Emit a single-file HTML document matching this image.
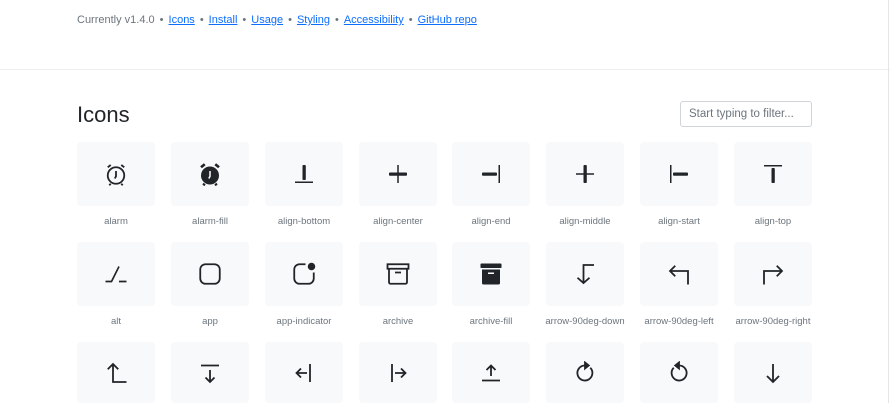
<!DOCTYPE html>
<html><head><meta charset="utf-8"><style>
*{box-sizing:border-box;margin:0;padding:0}
body{width:890px;height:403px;overflow:hidden;background:#fff;font-family:"Liberation Sans",sans-serif;position:relative}
.nav{position:absolute;left:77px;top:14px;font-size:11px;color:#6c757d;white-space:nowrap}
.nav a{color:#0d6efd;text-decoration:underline}
.nav span{margin:0 5px}
.hr{position:absolute;left:0;right:0;top:69px;border-top:1px solid #eceef0}
h1{position:absolute;left:77px;top:102px;font-size:22px;font-weight:500;color:#212529}
.in{position:absolute;left:680px;top:101px;width:132px;height:26px;border:1px solid #ced4da;border-radius:3px;font-size:11.5px;color:#6c757d;padding:6px 8px}
.t{position:absolute;width:78px;height:64px;background:#f8f9fa;border-radius:4px;display:flex;align-items:center;justify-content:center}
.l{position:absolute;width:90px;margin-left:-6px;text-align:center;font-size:9.5px;color:#6c757d;white-space:nowrap}
svg{width:24px;height:24px}
.vl{position:absolute;left:888px;top:0;bottom:0;border-left:1px solid #e5e5e5}
</style></head><body>
<div class="nav">Currently v1.4.0<span>•</span><a>Icons</a><span>•</span><a>Install</a><span>•</span><a>Usage</a><span>•</span><a>Styling</a><span>•</span><a>Accessibility</a><span>•</span><a>GitHub repo</a></div>
<div class="hr"></div>
<div class="vl"></div>
<h1>Icons</h1>
<div class="in">Start typing to filter...</div>

<!-- row1 -->
<div class="t" style="left:77px;top:142px"><svg viewBox="0 0 16 16" fill="none" stroke="#212529" stroke-width="1.2"><circle cx="8" cy="9" r="5.5"/><path d="M8 6v3.5l-.8 1.5M2.5 3.5l2-1.5M13.5 3.5l-2-1.5M4.5 14.5l-1 1M11.5 14.5l1 1"/></svg></div>
<div class="l" style="left:77px;top:216px">alarm</div>
<div class="t" style="left:171px;top:142px"><svg viewBox="0 0 16 16"><circle cx="8" cy="9" r="6" fill="#212529"/><path d="M2 3.5l2.5-2M14 3.5l-2.5-2M4.5 14.5l-1 1M11.5 14.5l1 1" stroke="#212529" stroke-width="1.8"/><path d="M8 6v3.5l-.8 1.5" stroke="#fff" stroke-width="1"/></svg></div>
<div class="l" style="left:171px;top:216px">alarm-fill</div>
<div class="t" style="left:265px;top:142px"><svg viewBox="0 0 16 16" fill="#212529"><rect x="7" y="2" width="2.2" height="10" rx=".6"/><rect x="2" y="13" width="12" height="1"/></svg></div>
<div class="l" style="left:265px;top:216px">align-bottom</div>
<div class="t" style="left:359px;top:142px"><svg viewBox="0 0 16 16" fill="#212529"><rect x="2" y="7" width="12" height="2.2" rx=".6"/><rect x="7.5" y="2" width="1" height="12"/></svg></div>
<div class="l" style="left:359px;top:216px">align-center</div>
<div class="t" style="left:452px;top:142px"><svg viewBox="0 0 16 16" fill="#212529"><rect x="2" y="7" width="10" height="2.2" rx=".6"/><rect x="13" y="2" width="1" height="12"/></svg></div>
<div class="l" style="left:452px;top:216px">align-end</div>
<div class="t" style="left:546px;top:142px"><svg viewBox="0 0 16 16" fill="#212529"><rect x="7" y="2" width="2.2" height="12" rx=".6"/><rect x="2" y="7.5" width="12" height="1"/></svg></div>
<div class="l" style="left:546px;top:216px">align-middle</div>
<div class="t" style="left:640px;top:142px"><svg viewBox="0 0 16 16" fill="#212529"><rect x="2" y="2" width="1" height="12"/><rect x="4" y="7" width="10" height="2.2" rx=".6"/></svg></div>
<div class="l" style="left:640px;top:216px">align-start</div>
<div class="t" style="left:734px;top:142px"><svg viewBox="0 0 16 16" fill="#212529"><rect x="2" y="2" width="12" height="1"/><rect x="7" y="4" width="2.2" height="10" rx=".6"/></svg></div>
<div class="l" style="left:734px;top:216px">align-top</div>

<!-- row2 -->
<div class="t" style="left:77px;top:242px"><svg viewBox="0 0 16 16" fill="none" stroke="#212529" stroke-width="1.1"><path d="M1 13h4l5-10M10 13h5"/></svg></div>
<div class="l" style="left:77px;top:316px">alt</div>
<div class="t" style="left:171px;top:242px"><svg viewBox="0 0 16 16" fill="none" stroke="#212529" stroke-width="1.2"><rect x="1.5" y="1.5" width="13" height="13" rx="3.5"/></svg></div>
<div class="l" style="left:171px;top:316px">app</div>
<div class="t" style="left:265px;top:242px"><svg viewBox="0 0 16 16" fill="none" stroke="#212529" stroke-width="1.2"><path d="M9 1.5H5A3.5 3.5 0 0 0 1.5 5v6A3.5 3.5 0 0 0 5 14.5h6A3.5 3.5 0 0 0 14.5 11V7"/><circle cx="13" cy="3" r="2.5" fill="#212529" stroke="none"/></svg></div>
<div class="l" style="left:265px;top:316px">app-indicator</div>
<div class="t" style="left:359px;top:242px"><svg viewBox="0 0 16 16" fill="none" stroke="#212529" stroke-width="1.2"><rect x="1" y="1.5" width="14" height="3"/><path d="M2 4.5v9a1 1 0 0 0 1 1h10a1 1 0 0 0 1-1v-9M6 7h4"/></svg></div>
<div class="l" style="left:359px;top:316px">archive</div>
<div class="t" style="left:452px;top:242px"><svg viewBox="0 0 16 16" fill="#212529"><rect x="1" y="1" width="14" height="3" rx=".5"/><path d="M2 5h12v9a1 1 0 0 1-1 1H3a1 1 0 0 1-1-1z"/><rect x="6" y="7" width="4" height="1" fill="#fff"/></svg></div>
<div class="l" style="left:452px;top:316px">archive-fill</div>
<div class="t" style="left:546px;top:242px"><svg viewBox="0 0 16 16" fill="none" stroke="#212529" stroke-width="1.2"><path d="M14 2H7v12M3 10.5l4 3.5 4-3.5"/></svg></div>
<div class="l" style="left:546px;top:316px">arrow-90deg-down</div>
<div class="t" style="left:640px;top:242px"><svg viewBox="0 0 16 16" fill="none" stroke="#212529" stroke-width="1.2"><path d="M14 15V6H2M5.5 2.5L2 6l3.5 3.5"/></svg></div>
<div class="l" style="left:640px;top:316px">arrow-90deg-left</div>
<div class="t" style="left:734px;top:242px"><svg viewBox="0 0 16 16" fill="none" stroke="#212529" stroke-width="1.2"><path d="M2 15V6h12M10.5 2.5L14 6l-3.5 3.5"/></svg></div>
<div class="l" style="left:734px;top:316px">arrow-90deg-right</div>

<!-- row3 -->
<div class="t" style="left:77px;top:342px;height:61px"><svg viewBox="0 0 16 16" fill="none" stroke="#212529" stroke-width="1.2"><path d="M15 14H6V2M2.5 5.5L6 2l3.5 3.5"/></svg></div>
<div class="t" style="left:171px;top:342px;height:61px"><svg viewBox="0 0 16 16" fill="none" stroke="#212529" stroke-width="1.2"><path d="M2 3h12M8 6v8M5 11l3 3 3-3"/></svg></div>
<div class="t" style="left:265px;top:342px;height:61px"><svg viewBox="0 0 16 16" fill="none" stroke="#212529" stroke-width="1.2"><path d="M12 2v12M10 8H3M6 5L3 8l3 3"/></svg></div>
<div class="t" style="left:359px;top:342px;height:61px"><svg viewBox="0 0 16 16" fill="none" stroke="#212529" stroke-width="1.2"><path d="M4 2v12M6 8h7M10 5l3 3-3 3"/></svg></div>
<div class="t" style="left:452px;top:342px;height:61px"><svg viewBox="0 0 16 16" fill="none" stroke="#212529" stroke-width="1.2"><path d="M2 13h12M8 10V3M5 6l3-3 3 3"/></svg></div>
<div class="t" style="left:546px;top:342px;height:61px"><svg viewBox="0 0 16 16" fill="none" stroke="#212529" stroke-width="1.2"><path d="M11.5 4.5A5 5 0 1 1 8 3"/><path d="M8 1l2.5 2L8 5z" fill="#212529"/></svg></div>
<div class="t" style="left:640px;top:342px;height:61px"><svg viewBox="0 0 16 16" fill="none" stroke="#212529" stroke-width="1.2"><path d="M4.5 4.5A5 5 0 1 0 8 3"/><path d="M8 1L5.5 3 8 5z" fill="#212529"/></svg></div>
<div class="t" style="left:734px;top:342px;height:61px"><svg viewBox="0 0 16 16" fill="none" stroke="#212529" stroke-width="1.2"><path d="M8 2v12M4 10l4 4 4-4"/></svg></div>
</body></html>
